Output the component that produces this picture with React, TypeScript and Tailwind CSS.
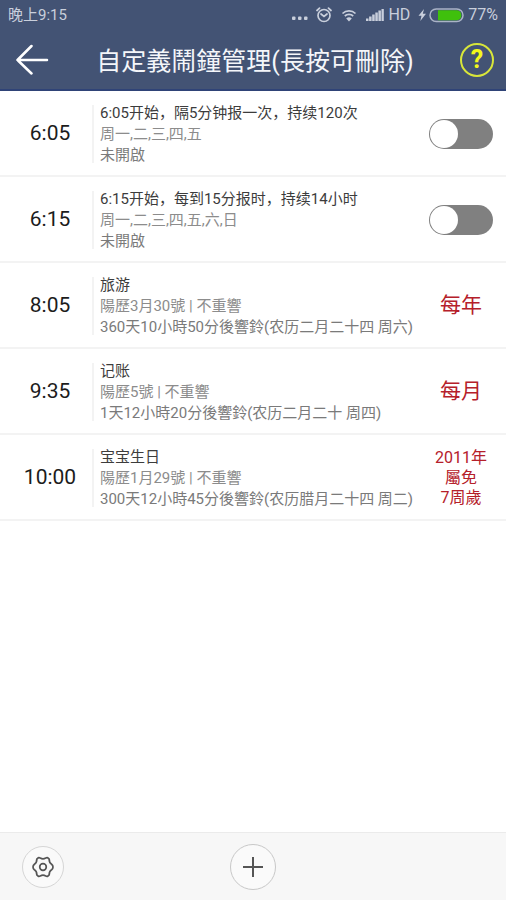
import { useState } from "react";

type Alarm = {
  time: string;
  title: string;
  repeat: string;
  status: string;
  tag?: string[];
};

const ALARMS: Alarm[] = [
  {
    time: "6:05",
    title: "6:05开始，隔5分钟报一次，持续120次",
    repeat: "周一,二,三,四,五",
    status: "未開啟",
  },
  {
    time: "6:15",
    title: "6:15开始，每到15分报时，持续14小时",
    repeat: "周一,二,三,四,五,六,日",
    status: "未開啟",
  },
  {
    time: "8:05",
    title: "旅游",
    repeat: "陽歷3月30號 | 不重響",
    status: "360天10小時50分後響鈴(农历二月二十四 周六)",
    tag: ["每年"],
  },
  {
    time: "9:35",
    title: "记账",
    repeat: "陽歷5號 | 不重響",
    status: "1天12小時20分後響鈴(农历二月二十 周四)",
    tag: ["每月"],
  },
  {
    time: "10:00",
    title: "宝宝生日",
    repeat: "陽歷1月29號 | 不重響",
    status: "300天12小時45分後響鈴(农历腊月二十四 周二)",
    tag: ["2011年", "屬免", "7周歲"],
  },
];

function StatusBar() {
  return (
    <div className="flex h-[30px] items-center justify-between px-2 text-[15px] text-[#c9cfdc]">
      <span>晚上9:15</span>
      <div className="flex items-center">
        <svg width="16" height="16" viewBox="0 0 16 16" fill="currentColor" aria-hidden>
          <rect x="0" y="9.5" width="3.5" height="3.5" rx="1" />
          <rect x="6" y="9.5" width="3.5" height="3.5" rx="1" />
          <rect x="12" y="9.5" width="3.5" height="3.5" rx="1" />
        </svg>
        <svg
          className="ml-2"
          width="16"
          height="16"
          viewBox="0 0 16 16"
          fill="none"
          stroke="currentColor"
          strokeWidth="1.7"
          strokeLinecap="round"
          aria-hidden
        >
          <circle cx="8" cy="8.5" r="6" />
          <path d="M1 3.5 3.5 1.2M15 3.5l-2.5-2.3M5 7l3 2.5L11 7" />
        </svg>
        <svg
          className="ml-2"
          width="18"
          height="16"
          viewBox="0 0 18 16"
          fill="none"
          stroke="currentColor"
          strokeWidth="1.7"
          aria-hidden
        >
          <path d="M2.5 6.5a9.5 9.5 0 0 1 13 0M4.8 9a6.2 6.2 0 0 1 8.400 0" />
          <path d="M9 14.5 6.2 11.6a4.2 4.2 0 0 1 5.6 0z" fill="currentColor" stroke="none" />
        </svg>
        <svg className="ml-2" width="18" height="16" viewBox="0 0 18 16" fill="currentColor" aria-hidden>
          <rect x="0" y="11.5" width="2.5" height="2.5" />
          <rect x="3.1" y="9.5" width="2.5" height="4.5" />
          <rect x="6.2" y="7.5" width="2.5" height="6.5" />
          <rect x="9.3" y="5.5" width="2.5" height="8.5" />
          <rect x="12.4" y="3.5" width="2.5" height="10.5" />
          <rect x="15.5" y="2" width="2.3" height="12" />
        </svg>
        <span className="ml-1 text-base">HD</span>
        <svg className="ml-2" width="46" height="16" viewBox="0 0 46 16" aria-hidden>
          <path d="M6 2 0.5 8.7h3L2.3 14 8 6.8H4.8z" fill="currentColor" />
          <rect x="12" y="2" width="33" height="12.5" rx="6.2" fill="none" stroke="#aab3c6" strokeWidth="1.5" />
          <path d="M20 3.300h19a5 5 0 0 1 0 9.900H20z" fill="#3fc00c" />
        </svg>
        <span className="ml-1 text-base">77%</span>
      </div>
    </div>
  );
}

function Header() {
  return (
    <header className="border-b-2 border-[#2f4377] bg-[#435374]">
      <StatusBar />
      <div className="flex h-[59px] items-center justify-between pl-4 pr-3">
        <button type="button" aria-label="返回" className="text-white">
          <svg
            width="34"
            height="34"
            viewBox="0 0 34 34"
            fill="none"
            stroke="currentColor"
            strokeWidth="2.5"
            strokeLinecap="round"
            strokeLinejoin="round"
            aria-hidden
          >
            <path d="M31 17H1.5M15.5 3 1.5 17l14 13.5" />
          </svg>
        </button>
        <h1 className="whitespace-nowrap pt-1 text-[25px] leading-8 text-[#f4f6fa]">
          自定義鬧鐘管理(長按可刪除)
        </h1>
        <button
          type="button"
          aria-label="說明"
          className="flex size-[34px] items-center justify-center rounded-full border-2 border-[#d8e63a] text-[25px] font-bold leading-none text-[#f2f71c]"
        >
          ?
        </button>
      </div>
    </header>
  );
}

function Toggle({ label }: { label: string }) {
  const [on, setOn] = useState(false);
  return (
    <input
      type="checkbox"
      role="switch"
      aria-label={label}
      checked={on}
      onChange={(e) => setOn(e.target.checked)}
      className="flex h-[30px] w-16 cursor-pointer appearance-none items-center rounded-full bg-[#808080] px-px before:size-7 before:rounded-full before:bg-white checked:justify-end checked:bg-[#435374]"
    />
  );
}

function AlarmRow({ alarm }: { alarm: Alarm }) {
  const small = alarm.tag && alarm.tag.length > 1;
  return (
    <li className="flex min-h-[86px] items-center border-b-2 border-[#f3f3f3] pt-0.5">
      <time className="w-[100px] shrink-0 text-center text-[21px] text-[#1c1c1c]">
        {alarm.time}
      </time>
      <div className="-ml-2 h-[58px] w-0.5 shrink-0 bg-[#f3f3f3]" />
      <div className="min-w-0 flex-1 whitespace-nowrap pl-[6px] text-[15px] leading-[21px] text-[#7a7a7a]">
        <p className="text-[#3c3c3c]">{alarm.title}</p>
        <p className="text-[#8c8c8c]">{alarm.repeat}</p>
        <p>{alarm.status}</p>
      </div>
      <div className="flex w-[90px] shrink-0 flex-col items-center text-[#b5202a]">
        {alarm.tag ? (
          alarm.tag.map((line) => (
            <span key={line} className={small ? "text-base leading-5" : "text-[21px]"}>
              {line}
            </span>
          ))
        ) : (
          <Toggle label={alarm.title} />
        )}
      </div>
    </li>
  );
}

function Footer() {
  return (
    <footer className="grid h-[68px] grid-cols-3 items-center border-t border-[#ebebeb] bg-[#f7f7f7] px-[22px] text-[#555555]">
      <button
        type="button"
        aria-label="設定"
        className="flex size-[42px] items-center justify-center rounded-full border border-[#d6d6d6] bg-[#fafafa]"
      >
        <svg
          width="22"
          height="22"
          viewBox="0 0 22 22"
          fill="none"
          stroke="currentColor"
          strokeWidth="1.7"
          strokeLinejoin="round"
          aria-hidden
        >
          <path d="M6.2 1.8Q7.2 1.3 8.3 2.1Q11 3.7 13.7 2.1Q14.8 1.3 15.8 1.8L17.2 3.2Q17.2 6.9 19.6 8.2Q21 9.2 21 11Q21 12.8 19.6 13.8Q17.2 15.1 17.2 18.8L15.8 20.2Q14.8 20.7 13.7 19.9Q11 18.3 8.3 19.9Q7.2 20.7 6.2 20.2L4.8 18.8Q4.8 15.1 2.4 13.8Q1 12.8 1 11Q1 9.2 2.4 8.2Q4.8 6.9 4.8 3.2Z" />
          <circle cx="11" cy="11" r="3.3" />
        </svg>
      </button>
      <button
        type="button"
        aria-label="新增鬧鐘"
        className="flex size-[46px] items-center justify-center justify-self-center rounded-full border border-[#c8c8c8] bg-[#fafafa]"
      >
        <svg width="20" height="20" viewBox="0 0 20 20" stroke="currentColor" strokeWidth="2" aria-hidden>
          <path d="M10 0v20M0 10h20" />
        </svg>
      </button>
    </footer>
  );
}

export default function App() {
  return (
    <div className="flex min-h-screen flex-col bg-white font-[Roboto,'Noto_Sans_CJK_SC',sans-serif]">
      <Header />
      <main className="flex-1">
        <ul>
          {ALARMS.map((alarm) => (
            <AlarmRow key={alarm.time} alarm={alarm} />
          ))}
        </ul>
      </main>
      <Footer />
    </div>
  );
}
